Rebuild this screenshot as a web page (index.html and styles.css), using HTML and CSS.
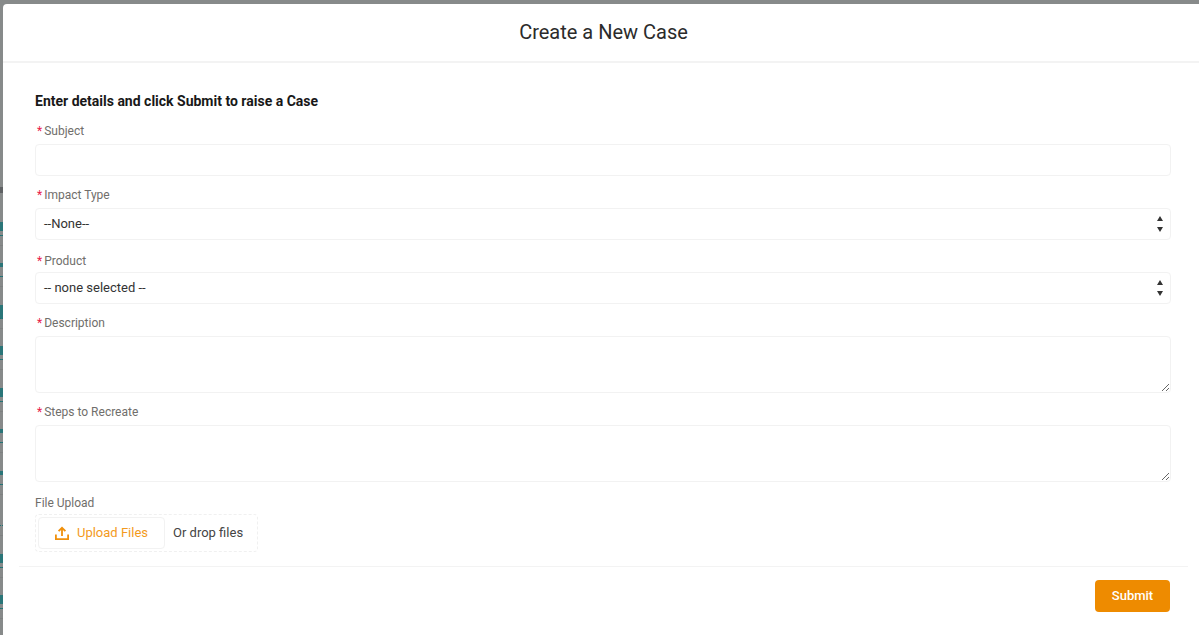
FILE: index.html
```html
<!DOCTYPE html>
<html lang="en-us">
  <head>
    <meta charset="utf-8">
    <title>Create a New Case</title>
    <link rel="stylesheet" href="styles.css">
  </head>
  <body>
    <div class="page">
      <!-- list page behind the overlay, only a sliver of each link shows -->
      <div class="behind">
        <div class="behindHead"></div>
        <div class="behindRow"><i class="mark"></i></div>
        <div class="behindRow"><i class="mark markShort"></i></div>
        <div class="behindRow"><i class="mark markTall"></i></div>
        <div class="behindRow"><i class="mark"></i></div>
        <div class="behindRow"><i class="mark"></i></div>
        <div class="behindRow"><i class="mark markShort"></i></div>
        <div class="behindRow"><i class="mark markShort"></i></div>
        <div class="behindRow"><i class="mark markNone"></i></div>
        <div class="behindRow"><i class="mark"></i></div>
        <div class="behindRow"><i class="mark"></i></div>
      </div>

      <div class="modal">
        <header class="modalHeader">
          <h2>Create a New Case</h2>
        </header>

        <form class="modalBody">
          <h3>Enter details and click Submit to raise a Case</h3>

          <div class="field fieldSubject">
            <label><abbr>*</abbr>Subject</label>
            <input type="text" class="control">
          </div>

          <div class="field">
            <label><abbr>*</abbr>Impact Type</label>
            <div class="control selectBox">
              <span>--None--</span>
              <svg class="arrows" viewBox="0 0 6 16" width="6" height="16"><path d="M3 0 6 5H0zM0 11h6l-3 5z"/></svg>
            </div>
          </div>

          <div class="field fieldProduct">
            <label><abbr>*</abbr>Product</label>
            <div class="control selectBox">
              <span>-- none selected --</span>
              <svg class="arrows" viewBox="0 0 6 16" width="6" height="16"><path d="M3 0 6 5H0zM0 11h6l-3 5z"/></svg>
            </div>
          </div>

          <div class="field fieldDesc">
            <label><abbr>*</abbr>Description</label>
            <textarea class="control"></textarea>
          </div>

          <div class="field">
            <label><abbr>*</abbr>Steps to Recreate</label>
            <textarea class="control"></textarea>
          </div>

          <div class="field fieldUpload">
            <label>File Upload</label>
            <div class="dropZone">
              <button type="button" class="uploadBtn">
                <svg viewBox="0 0 14 14" width="14" height="14" fill="none" stroke="#f0900c" stroke-width="1.8"><path d="M7 10V2M3.600 5.200 7 1.800 10.400 5.200"/><path d="M.9 8.500v4.600h12.200V8.500"/></svg>
                <span>Upload Files</span>
              </button>
              <span>Or drop files</span>
            </div>
          </div>
        </form>

        <footer class="modalFooter">
          <button type="button" class="submitBtn">Submit</button>
        </footer>
      </div>
    </div>
  </body>
</html>
```

FILE: styles.css
```css
* {
  box-sizing: border-box;
}

html, body {
  margin: 0;
  height: 100%;
  overflow: hidden;
}

body {
  background: #878a8a;
  font-family: Roboto, "Liberation Sans", sans-serif;
  font-size: 13px;
  color: #181818;
}

.page {
  width: 1204px;
  height: 635px;
  display: flex;
}

.behind {
  width: 3px;
  padding-top: 187px;
  overflow: hidden;
}

.behindHead {
  width: 3px;
  height: 6px;
  margin-bottom: 11px;
  background: #5f6264;
}

.behindRow {
  height: 41.5px;
  padding-bottom: 9px;
  border-bottom: 1px solid #7e8181;
  display: flex;
  flex-direction: column;
  justify-content: flex-end;
}

.mark {
  display: block;
  width: 3px;
  height: 14px;
  border-bottom: 1px dotted #1d7275;
  background: linear-gradient(#2a7578 9px, transparent 9px);
}

.markShort {
  background: linear-gradient(#2a7578 4px, transparent 4px);
}

.markTall {
  background: linear-gradient(#2a7578 14px, transparent 14px);
}

.markNone {
  background: none;
}

.modal {
  width: 1201px;
  height: 631px;
  margin-top: 4px;
  background: #fff;
  border-radius: 4px 4px 0 0;
}

.modalHeader {
  height: 59px;
  padding-bottom: 2px;
  border-bottom: 2px solid #f3f3f3;
  display: flex;
  align-items: center;
  justify-content: center;
}

.modalHeader h2 {
  margin: 0;
  font-size: 20px;
  font-weight: 400;
  color: #2b2b2b;
}

.modalBody {
  padding: 30px 33px 0 32px;
}

.modalBody h3 {
  margin: 0;
  height: 17px;
  line-height: 17px;
  font-size: 14px;
  font-weight: 700;
  color: #181818;
}

.field {
  margin-top: 11px;
}

.field label {
  display: block;
  height: 18px;
  line-height: 17px;
  font-size: 12px;
  color: #706e6b;
  margin-bottom: 3px;
}

.fieldSubject {
  margin-top: 13px;
}

.fieldProduct {
  margin-top: 13px;
}

.fieldProduct label {
  margin-bottom: 1px;
}

.fieldDesc {
  margin-top: 11px;
}

.fieldUpload {
  margin-top: 14px;
}

.fieldUpload label {
  margin-bottom: 0;
  line-height: 15px;
}

.field abbr {
  color: #e8204a;
  margin: 0 2px 0 2px;
}

.control {
  display: block;
  width: 100%;
  height: 32px;
  border: 1px solid #f2f2f2;
  border-radius: 4px;
  background: #fff;
  font-family: inherit;
  font-size: 13px;
  padding: 0 8px;
}

.selectBox {
  display: flex;
  align-items: center;
  justify-content: space-between;
  color: #333;
  padding-right: 7px;
  padding-bottom: 1px;
}

.arrows {
  fill: #333;
}

textarea.control {
  height: 57px;
  padding: 6px 8px;
  resize: vertical;
}

.dropZone {
  width: 223px;
  height: 38px;
  border: 1px dashed #f0f0f0;
  border-radius: 4px;
  padding: 2px;
  display: flex;
  align-items: center;
  gap: 8px;
  color: #444;
}

.dropZone span {
  margin-bottom: 2px;
}

.uploadBtn {
  width: 127px;
  height: 32px;
  border: 1px solid #f2f2f2;
  border-radius: 4px;
  background: #fff;
  color: #f39a1d;
  font-family: inherit;
  font-size: 13px;
  display: flex;
  align-items: center;
  justify-content: center;
  gap: 8px;
  padding: 0;
}

.modalFooter {
  margin: 14px 16px 0;
  border-top: 1px solid #f3f3f3;
  padding: 13px 18px 0 0;
  display: flex;
  justify-content: flex-end;
}

.submitBtn {
  width: 75px;
  height: 32px;
  padding: 0 0 1px;
  border: 0;
  border-radius: 4px;
  background: #ee8b00;
  color: #fff;
  font-family: inherit;
  font-size: 13px;
  font-weight: 500;
}
```
